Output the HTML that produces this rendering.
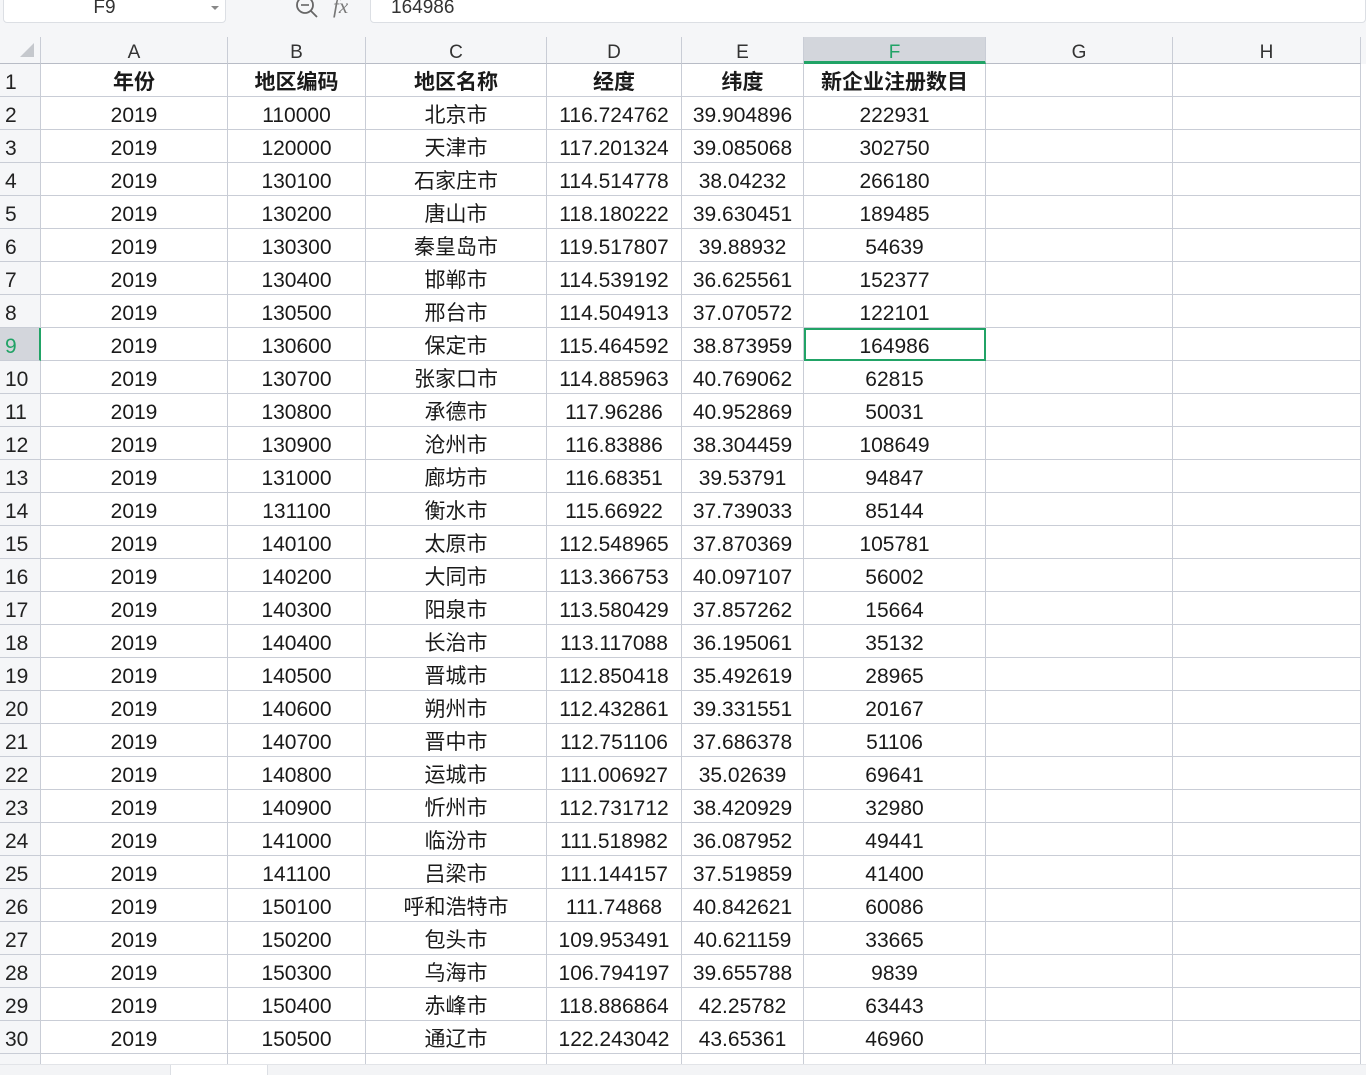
<!DOCTYPE html>
<html><head><meta charset="utf-8"><style>
*{box-sizing:border-box;margin:0;padding:0}
html,body{width:1366px;height:1075px;overflow:hidden}
body{background:#f5f6f8;font-family:"Liberation Sans","Noto Sans CJK SC",sans-serif;color:#1a1a1a;position:relative}
.top{position:absolute;left:0;top:0;width:1366px;height:24px;background:#f5f6f8}
.nb{position:absolute;left:3px;top:-6px;width:223px;height:29px;background:#fff;border:1px solid #dcdfe4;border-radius:4px;font-size:19px;color:#333;text-align:center;line-height:26px;padding-right:20px}
.nb:after{content:"";position:absolute;right:6px;top:11px;border:4px solid transparent;border-top:4px solid #888}
.fx{position:absolute;left:370px;top:-6px;width:996px;height:29px;background:#fff;border:1px solid #dcdfe4;border-radius:4px;font-size:19px;color:#333;line-height:26px;padding-left:20px}
.grid{position:absolute;left:0;top:37px;width:1366px;height:1027px;overflow:hidden}
.r{display:flex;height:33px;background:#fff}
.r.h{height:27px;background:#f5f6f8}
.c{border-right:1px solid #c9cdd6;border-bottom:1px solid #c9cdd6;text-align:center;font-size:21px;line-height:32px;padding-top:3px;white-space:nowrap;overflow:hidden}
.h .c{font-size:19px;line-height:27px;padding-top:2px;color:#333;border-bottom:1px solid #b8bcc6}
.c:nth-child(1){width:41px;text-align:left;padding-left:5px;background:#f5f6f8;color:#222}
.c:nth-child(2){width:187px}.c:nth-child(3){width:138px}.c:nth-child(4){width:181px}.c:nth-child(5){width:135px}.c:nth-child(6){width:122px}.c:nth-child(7){width:182px}.c:nth-child(8){width:187px}.c:nth-child(9){width:188px}
.b{font-weight:bold}
.tabs{position:absolute;left:0;top:1064px;width:1366px;height:11px;background:#f3f4f6;border-top:1px solid #e2e4e8;z-index:5}
.tab{position:absolute;left:170px;top:0;width:98px;height:11px;background:#fff;border-left:1px solid #dcdfe4;border-right:1px solid #dcdfe4}
</style></head><body>
<div class="top"><div class="nb">F9</div>
<svg style="position:absolute;left:294px;top:0" width="26" height="20" viewBox="0 0 26 20"><circle cx="11" cy="5" r="8" fill="none" stroke="#666" stroke-width="1.8"/><line x1="7" y1="5" x2="15" y2="5" stroke="#666" stroke-width="1.6"/><line x1="17" y1="11" x2="23" y2="17" stroke="#666" stroke-width="1.8"/></svg>
<div style="position:absolute;left:333px;top:-6px;font-style:italic;font-size:21px;color:#777;font-family:'Liberation Serif',serif">fx</div>
<div class="fx">164986</div></div>
<div class="grid">
<div class="r h"><div class="c" style="background:#f5f6f8;padding-top:0"><svg width="20" height="20" style="margin-top:4px;margin-left:13px"><polygon points="16,2 16,16 2,16" fill="#c5c8cd"/></svg></div><div class="c">A</div><div class="c">B</div><div class="c">C</div><div class="c">D</div><div class="c">E</div><div class="c" style="background:#d3d6dc;color:#21a366;border-bottom:3px solid #21a366">F</div><div class="c">G</div><div class="c">H</div></div>
<div class="r"><div class="c">1</div><div class="c b">年份</div><div class="c b">地区编码</div><div class="c b">地区名称</div><div class="c b">经度</div><div class="c b">纬度</div><div class="c b">新企业注册数目</div><div class="c"></div><div class="c"></div></div>
<div class="r"><div class="c">2</div><div class="c">2019</div><div class="c">110000</div><div class="c">北京市</div><div class="c">116.724762</div><div class="c">39.904896</div><div class="c">222931</div><div class="c"></div><div class="c"></div></div>
<div class="r"><div class="c">3</div><div class="c">2019</div><div class="c">120000</div><div class="c">天津市</div><div class="c">117.201324</div><div class="c">39.085068</div><div class="c">302750</div><div class="c"></div><div class="c"></div></div>
<div class="r"><div class="c">4</div><div class="c">2019</div><div class="c">130100</div><div class="c">石家庄市</div><div class="c">114.514778</div><div class="c">38.04232</div><div class="c">266180</div><div class="c"></div><div class="c"></div></div>
<div class="r"><div class="c">5</div><div class="c">2019</div><div class="c">130200</div><div class="c">唐山市</div><div class="c">118.180222</div><div class="c">39.630451</div><div class="c">189485</div><div class="c"></div><div class="c"></div></div>
<div class="r"><div class="c">6</div><div class="c">2019</div><div class="c">130300</div><div class="c">秦皇岛市</div><div class="c">119.517807</div><div class="c">39.88932</div><div class="c">54639</div><div class="c"></div><div class="c"></div></div>
<div class="r"><div class="c">7</div><div class="c">2019</div><div class="c">130400</div><div class="c">邯郸市</div><div class="c">114.539192</div><div class="c">36.625561</div><div class="c">152377</div><div class="c"></div><div class="c"></div></div>
<div class="r"><div class="c">8</div><div class="c">2019</div><div class="c">130500</div><div class="c">邢台市</div><div class="c">114.504913</div><div class="c">37.070572</div><div class="c">122101</div><div class="c"></div><div class="c"></div></div>
<div class="r"><div class="c" style="background:#d3d6dc;color:#21a366;border-right:2px solid #21a366">9</div><div class="c">2019</div><div class="c">130600</div><div class="c">保定市</div><div class="c">115.464592</div><div class="c">38.873959</div><div class="c" style="outline:2px solid #21a366;outline-offset:-2px;position:relative">164986</div><div class="c"></div><div class="c"></div></div>
<div class="r"><div class="c">10</div><div class="c">2019</div><div class="c">130700</div><div class="c">张家口市</div><div class="c">114.885963</div><div class="c">40.769062</div><div class="c">62815</div><div class="c"></div><div class="c"></div></div>
<div class="r"><div class="c">11</div><div class="c">2019</div><div class="c">130800</div><div class="c">承德市</div><div class="c">117.96286</div><div class="c">40.952869</div><div class="c">50031</div><div class="c"></div><div class="c"></div></div>
<div class="r"><div class="c">12</div><div class="c">2019</div><div class="c">130900</div><div class="c">沧州市</div><div class="c">116.83886</div><div class="c">38.304459</div><div class="c">108649</div><div class="c"></div><div class="c"></div></div>
<div class="r"><div class="c">13</div><div class="c">2019</div><div class="c">131000</div><div class="c">廊坊市</div><div class="c">116.68351</div><div class="c">39.53791</div><div class="c">94847</div><div class="c"></div><div class="c"></div></div>
<div class="r"><div class="c">14</div><div class="c">2019</div><div class="c">131100</div><div class="c">衡水市</div><div class="c">115.66922</div><div class="c">37.739033</div><div class="c">85144</div><div class="c"></div><div class="c"></div></div>
<div class="r"><div class="c">15</div><div class="c">2019</div><div class="c">140100</div><div class="c">太原市</div><div class="c">112.548965</div><div class="c">37.870369</div><div class="c">105781</div><div class="c"></div><div class="c"></div></div>
<div class="r"><div class="c">16</div><div class="c">2019</div><div class="c">140200</div><div class="c">大同市</div><div class="c">113.366753</div><div class="c">40.097107</div><div class="c">56002</div><div class="c"></div><div class="c"></div></div>
<div class="r"><div class="c">17</div><div class="c">2019</div><div class="c">140300</div><div class="c">阳泉市</div><div class="c">113.580429</div><div class="c">37.857262</div><div class="c">15664</div><div class="c"></div><div class="c"></div></div>
<div class="r"><div class="c">18</div><div class="c">2019</div><div class="c">140400</div><div class="c">长治市</div><div class="c">113.117088</div><div class="c">36.195061</div><div class="c">35132</div><div class="c"></div><div class="c"></div></div>
<div class="r"><div class="c">19</div><div class="c">2019</div><div class="c">140500</div><div class="c">晋城市</div><div class="c">112.850418</div><div class="c">35.492619</div><div class="c">28965</div><div class="c"></div><div class="c"></div></div>
<div class="r"><div class="c">20</div><div class="c">2019</div><div class="c">140600</div><div class="c">朔州市</div><div class="c">112.432861</div><div class="c">39.331551</div><div class="c">20167</div><div class="c"></div><div class="c"></div></div>
<div class="r"><div class="c">21</div><div class="c">2019</div><div class="c">140700</div><div class="c">晋中市</div><div class="c">112.751106</div><div class="c">37.686378</div><div class="c">51106</div><div class="c"></div><div class="c"></div></div>
<div class="r"><div class="c">22</div><div class="c">2019</div><div class="c">140800</div><div class="c">运城市</div><div class="c">111.006927</div><div class="c">35.02639</div><div class="c">69641</div><div class="c"></div><div class="c"></div></div>
<div class="r"><div class="c">23</div><div class="c">2019</div><div class="c">140900</div><div class="c">忻州市</div><div class="c">112.731712</div><div class="c">38.420929</div><div class="c">32980</div><div class="c"></div><div class="c"></div></div>
<div class="r"><div class="c">24</div><div class="c">2019</div><div class="c">141000</div><div class="c">临汾市</div><div class="c">111.518982</div><div class="c">36.087952</div><div class="c">49441</div><div class="c"></div><div class="c"></div></div>
<div class="r"><div class="c">25</div><div class="c">2019</div><div class="c">141100</div><div class="c">吕梁市</div><div class="c">111.144157</div><div class="c">37.519859</div><div class="c">41400</div><div class="c"></div><div class="c"></div></div>
<div class="r"><div class="c">26</div><div class="c">2019</div><div class="c">150100</div><div class="c">呼和浩特市</div><div class="c">111.74868</div><div class="c">40.842621</div><div class="c">60086</div><div class="c"></div><div class="c"></div></div>
<div class="r"><div class="c">27</div><div class="c">2019</div><div class="c">150200</div><div class="c">包头市</div><div class="c">109.953491</div><div class="c">40.621159</div><div class="c">33665</div><div class="c"></div><div class="c"></div></div>
<div class="r"><div class="c">28</div><div class="c">2019</div><div class="c">150300</div><div class="c">乌海市</div><div class="c">106.794197</div><div class="c">39.655788</div><div class="c">9839</div><div class="c"></div><div class="c"></div></div>
<div class="r"><div class="c">29</div><div class="c">2019</div><div class="c">150400</div><div class="c">赤峰市</div><div class="c">118.886864</div><div class="c">42.25782</div><div class="c">63443</div><div class="c"></div><div class="c"></div></div>
<div class="r"><div class="c">30</div><div class="c">2019</div><div class="c">150500</div><div class="c">通辽市</div><div class="c">122.243042</div><div class="c">43.65361</div><div class="c">46960</div><div class="c"></div><div class="c"></div></div>
<div class="r"><div class="c"></div><div class="c"></div><div class="c"></div><div class="c"></div><div class="c"></div><div class="c"></div><div class="c"></div><div class="c"></div><div class="c"></div></div>
</div>
<div class="tabs"><div class="tab"></div></div>
</body></html>
